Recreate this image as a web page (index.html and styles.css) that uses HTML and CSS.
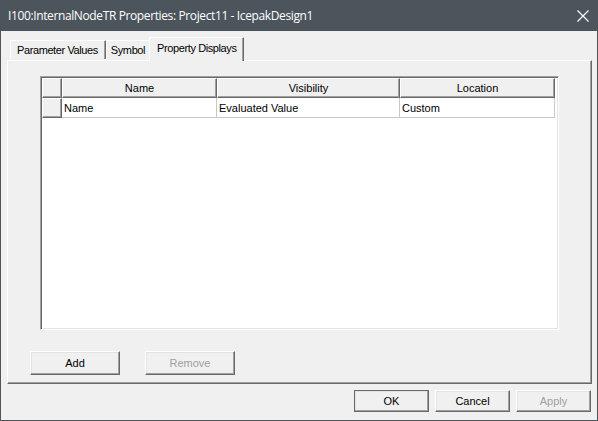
FILE: index.html
```html
<!DOCTYPE html>
<html lang="en">
<head>
    <meta charset="UTF-8">
    <title>I100:InternalNodeTR Properties</title>
    <link rel="stylesheet" href="styles.css">
</head>
<body>
    <div class="dialog">
        <!-- title bar -->
        <div class="titlebar">
            <span class="title">I100:InternalNodeTR Properties: Project11 - IcepakDesign1</span>
            <svg class="close" width="12" height="12" viewBox="0 0 12 12">
                <path d="M0.5 0.5 L11.5 11.5 M11.5 0.5 L0.5 11.5" stroke="#ffffff" stroke-width="1.2" fill="none"/>
            </svg>
        </div>

        <div class="client">
            <div class="tabs">
                <div class="tab first">Parameter Values</div>
                <div class="tab">Symbol</div>
                <div class="tab active">Property Displays</div>
            </div>

            <div class="panel">
                <div class="grid">
                    <table>
                        <tr>
                            <th class="corner"></th>
                            <th class="c-name">Name</th>
                            <th class="c-vis">Visibility</th>
                            <th class="c-loc">Location</th>
                        </tr>
                        <tr>
                            <th class="corner"></th>
                            <td>Name</td>
                            <td>Evaluated Value</td>
                            <td>Custom</td>
                        </tr>
                    </table>
                </div>
                <div class="panel-buttons">
                    <button class="btn wide">Add</button>
                    <button class="btn wide disabled">Remove</button>
                </div>
            </div>

            <div class="footer">
                <button class="btn default">OK</button>
                <button class="btn">Cancel</button>
                <button class="btn disabled">Apply</button>
            </div>
        </div>
    </div>
</body>
</html>
```

FILE: styles.css
```css
/* General styling */
html, body {
    margin: 0;
    padding: 0;
    background: #f0f0f0;
}

body {
    font-family: "Liberation Sans", Arial, sans-serif;
    font-size: 11px;
    color: #000;
}

.dialog {
    width: 598px;
    height: 421px;
    box-sizing: border-box;
    border: 1px solid #4c555c;
    border-top: none;
    display: flex;
    flex-direction: column;
    background: #f0f0f0;
}

/* Title bar */
.titlebar {
    height: 31px;
    background: #4c555c;
    display: flex;
    align-items: center;
    justify-content: space-between;
    padding: 0 8px 0 8px;
    margin: 0 -1px;
}

.title {
    font-family: "Open Sans", "Noto Sans", sans-serif;
    font-size: 12px;
    color: #ffffff;
    letter-spacing: -0.38px;
}

.close {
    margin-right: 1px;
}

/* Client area */
.client {
    flex: 1;
    display: flex;
    flex-direction: column;
    padding: 6px 5px 0 6px;
}

.tabs {
    display: flex;
    align-items: flex-end;
    height: 23px;
    padding-left: 3px;
    position: relative;
    z-index: 1;
}

.tab {
    height: 19px;
    box-sizing: border-box;
    padding: 3px 5px 0 4px;
    border-top: 1px solid #ffffff;
    border-left: 1px solid #ffffff;
    border-right: 1px solid #696969;
    box-shadow: inset -1px 0 #a0a0a0;
    margin-bottom: 1px;
    white-space: nowrap;
    letter-spacing: -0.4px;
}

.tab.first {
    padding: 3px 7px 0 6px;
}

.tab.active {
    height: 24px;
    margin: 0 0 -1px -2px;
    padding: 4px 6px 0 7px;
    background: #f0f0f0;
}

/* Tab panel */
.panel {
    height: 324px;
    box-sizing: border-box;
    border-top: 1px solid #ffffff;
    border-left: 1px solid #ffffff;
    border-right: 1px solid #696969;
    border-bottom: 1px solid #696969;
    box-shadow: inset -1px -1px #a0a0a0;
    padding: 15px 32px 0 32px;
    display: flex;
    flex-direction: column;
}

.grid {
    height: 254px;
    box-sizing: border-box;
    background: #ffffff;
    border-top: 1px solid #a0a0a0;
    border-left: 1px solid #a0a0a0;
    border-right: 1px solid #ffffff;
    border-bottom: 1px solid #ffffff;
    box-shadow: inset 1px 1px #696969, inset -1px -1px #e3e3e3;
    padding: 1px 0 0 1px;
}

table {
    border-collapse: separate;
    border-spacing: 0;
    table-layout: fixed;
}

th {
    height: 20px;
    box-sizing: border-box;
    padding: 0;
    background: #f0f0f0;
    font-weight: normal;
    text-align: center;
    border-top: 1px solid #ffffff;
    border-left: 1px solid #ffffff;
    border-right: 1px solid #696969;
    border-bottom: 1px solid #696969;
    box-shadow: inset -1px -1px #a0a0a0;
}

th.corner { width: 20px; }
th.c-name { width: 155px; }
th.c-vis { width: 183px; }
th.c-loc { width: 155px; }

td {
    height: 20px;
    box-sizing: border-box;
    padding: 0 0 0 2px;
    border-right: 1px solid #c8c8c8;
    border-bottom: 1px solid #c8c8c8;
}

.panel-buttons {
    display: flex;
    gap: 25px;
    margin: 21px 0 0 -10px;
}

/* Buttons */
.btn {
    width: 75px;
    height: 22px;
    box-sizing: border-box;
    padding: 0;
    font-family: "Liberation Sans", Arial, sans-serif;
    font-size: 11px;
    color: #000;
    background: #f0f0f0;
    border-top: 1px solid #ffffff;
    border-left: 1px solid #ffffff;
    border-right: 1px solid #696969;
    border-bottom: 1px solid #696969;
    box-shadow: inset -1px -1px #a0a0a0, inset 1px 1px #e3e3e3;
}

.btn.wide {
    width: 90px;
    height: 24px;
}

.btn.default {
    outline: 1px solid #696969;
    outline-offset: -1px;
}

.btn.disabled {
    color: #a0a0a0;
}

.footer {
    display: flex;
    justify-content: flex-end;
    gap: 6px;
    margin-top: 6px;
    padding-right: 1px;
}
```
